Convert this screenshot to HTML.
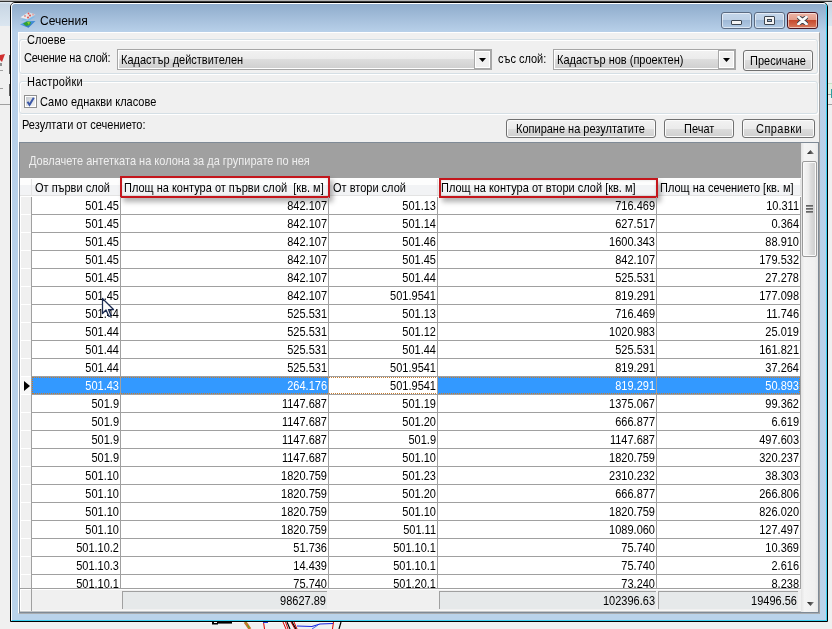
<!DOCTYPE html>
<html><head><meta charset="utf-8"><style>
*{margin:0;padding:0;box-sizing:border-box}
html,body{width:832px;height:629px;overflow:hidden;background:#f0f0f0;font-family:"Liberation Sans",sans-serif;font-size:11px;color:#000}
.a{position:absolute}
.t{position:absolute;white-space:pre;line-height:13px;font-size:11px;transform:scaleY(1.14);transform-origin:0 0;will-change:transform}
.r{text-align:right}
.gb{position:absolute;border:1px solid #d5dfe5;border-radius:3px;box-shadow:inset 1px 1px 0 #fff,1px 1px 0 #fff}
.tbtn{position:absolute;top:12px;width:31px;height:17px;border:1px solid #5b6b82;border-radius:3px;background:linear-gradient(#c4d6ea 0,#bdd0e6 7px,#9db7d5 7px,#b3cbe5 100%);box-shadow:inset 0 0 0 1px rgba(255,255,255,.55)}
.btn{position:absolute;border:1px solid #707070;border-radius:3px;background:linear-gradient(#f2f2f2 0,#ebebeb 50%,#dddddd 50%,#cfcfcf 100%);box-shadow:inset 0 0 0 1px #fbfbfb}
.combo{position:absolute;border:1px solid #a6a6a6;background:linear-gradient(#f2f2f2 0,#ebebeb 50%,#dddddd 50%,#cfcfcf 100%);box-shadow:inset 0 0 0 1px #fff}
.hl{position:absolute;left:0;width:781px;height:1px;background:#a0a0a0}
.vl{position:absolute;width:1px;background:#a0a0a0}
</style></head><body>
<div class="a" style="left:0;top:0;width:832px;height:1px;background:#b4b4b4"></div>
<div class="a" style="left:0;top:1px;width:832px;height:1px;background:#333"></div>
<div class="a" style="left:0;top:2px;width:10px;height:24px;background:linear-gradient(#e6edf5,#c8d6e4 2px,#dbe6f0)"></div>
<div class="a" style="left:828px;top:2px;width:4px;height:24px;background:linear-gradient(#e6edf5,#c8d6e4 2px,#dbe6f0)"></div>
<div class="a" style="left:0;top:104px;width:10px;height:1px;background:#a0a0a0"></div>
<div class="a" style="left:828px;top:104px;width:4px;height:1px;background:#a0a0a0"></div>
<div class="a" style="left:828px;top:83px;width:4px;height:11px;background:#e6f2e6;border-top:1px solid #c4e4c4"></div>
<div class="a" style="left:828px;top:94px;width:3px;height:1px;background:#a0a0a0"></div>
<div class="a" style="left:831px;top:89px;width:1px;height:9px;background:#30a0a0"></div>
<svg class="a" style="left:0;top:54px" width="10" height="44"><polygon points="0,1 5,0 2,8 0,6" fill="#d03030"/><rect x="0" y="9" width="2" height="3" fill="#909090"/><rect x="0" y="16" width="3" height="1" fill="#a0a0a0"/><rect x="0" y="34" width="3" height="1" fill="#a0a0a0"/><rect x="9" y="1" width="1" height="19" fill="#606060"/><rect x="9" y="30" width="1" height="12" fill="#606060"/></svg>
<div class="a" style="left:10px;top:2px;width:818px;height:620px;border:1px solid #000;border-radius:5px 5px 0 0;background:linear-gradient(#8eabcb 0px,#b8d0e9 29px,#bad3eb 100%)"></div>
<div class="a" style="left:11px;top:3px;width:816px;height:618px;border-top:1px solid #fff;border-left:1px solid #fff;border-right:1px solid #3ad0f0;border-bottom:1px solid #3ad0f0;border-radius:4px 4px 0 0"></div>
<svg class="a" style="left:18px;top:10px" width="22" height="20" viewBox="0 0 22 20">
<defs><linearGradient id="gb" x1="0" y1="0" x2="1" y2="1"><stop offset="0" stop-color="#6ab8f0"/><stop offset="1" stop-color="#1a60b8"/></linearGradient>
<linearGradient id="gt" x1="0" y1="0" x2="1" y2="0"><stop offset="0" stop-color="#f4f4f4"/><stop offset="1" stop-color="#d0d4d8"/></linearGradient></defs>
<polygon points="2,14.5 8.5,11 17.5,11 10.5,17.8" fill="url(#gb)"/>
<polygon points="5,13.5 9,11.5 13,12 12,15 8,16" fill="#30a030"/><polygon points="9,12 12,11.5 11,15" fill="#90d030"/>
<polygon points="3,10.5 9,7 17.5,6.5 11,10.5" fill="#70b8ee" opacity=".75"/>
<polygon points="2.5,7.3 10.5,2.2 17.5,4.5 9.5,9.5" fill="url(#gt)"/>
<circle cx="10.5" cy="3.5" r=".9" fill="#e05050"/><circle cx="7" cy="6" r=".9" fill="#e08080"/><circle cx="12" cy="5.5" r="1" fill="#e05050"/><circle cx="10" cy="7.5" r="1" fill="#e05050"/><circle cx="15" cy="4.5" r=".9" fill="#e8a0a0"/>
</svg>
<div class="t" style="left:40px;top:14px;font-size:12px;line-height:15px;transform:none;color:#000">Сечения</div>
<div class="tbtn" style="left:721px"></div>
<div class="tbtn" style="left:754px"></div>
<div class="tbtn" style="left:787px;border-color:#4a1520;background:linear-gradient(#ecb4a6 0,#e29c8a 7px,#c5462a 7px,#d87a5e 100%)"></div>
<div class="a" style="left:731px;top:20px;width:11px;height:5px;border:1px solid #3c4550;border-radius:1px;background:#f4f4f4"></div>
<div class="a" style="left:764px;top:16px;width:11px;height:9px;border:1px solid #3c4550;border-radius:1px;background:#f4f4f4"></div>
<div class="a" style="left:767px;top:19px;width:5px;height:3px;border:1px solid #3c4550;background:#9db7d5"></div>
<svg class="a" style="left:797px;top:16px" width="11" height="9" viewBox="0 0 11 9"><path d="M1.5,1 L9.5,8 M9.5,1 L1.5,8" stroke="#3a3f48" stroke-width="4.6" stroke-linecap="round"/><path d="M1.5,1 L9.5,8 M9.5,1 L1.5,8" stroke="#fafafa" stroke-width="2.8" stroke-linecap="round"/></svg>
<div class="a" style="left:18px;top:32px;width:802px;height:582px;background:#f0f0f0;border-top:1px solid #fff;border-left:1px solid #fff;border-right:1px solid #a0a0a0;border-bottom:1px solid #a8acb0"></div>
<div class="gb" style="left:19px;top:39px;width:799px;height:35px"></div>
<div class="a" style="left:27px;top:36px;width:38px;height:8px;background:#f0f0f0"></div>
<div class="t" style="left:27px;top:33px;">Слоеве</div>
<div class="t" style="left:24px;top:51px;letter-spacing:-0.2px">Сечение на слой:</div>
<div class="combo" style="left:117px;top:49px;width:375px;height:21px"></div>
<div class="a" style="left:474px;top:49px;width:18px;height:21px;background:#f0f0f0;border:2px solid #a8a8a8;border-left:1px solid #a8a8a8;box-shadow:inset 1px 1px 0 #fff,inset -1px -1px 0 #fff"></div>
<svg class="a" style="left:479px;top:58px" width="8" height="5"><polygon points="0,0 7,0 3.5,4" fill="#000"/></svg>
<div class="t" style="left:121px;top:53px;">Кадастър действителен</div>
<div class="t" style="left:498px;top:52px;">със слой:</div>
<div class="combo" style="left:553px;top:49px;width:183px;height:21px"></div>
<div class="a" style="left:718px;top:49px;width:18px;height:21px;background:#f0f0f0;border:2px solid #a8a8a8;border-left:1px solid #a8a8a8;box-shadow:inset 1px 1px 0 #fff,inset -1px -1px 0 #fff"></div>
<svg class="a" style="left:723px;top:58px" width="8" height="5"><polygon points="0,0 7,0 3.5,4" fill="#000"/></svg>
<div class="t" style="left:557px;top:53px;">Кадастър нов (проектен)</div>
<div class="btn" style="left:743px;top:50px;width:70px;height:21px"></div>
<div class="t" style="left:750px;top:54px;">Пресичане</div>
<div class="gb" style="left:19px;top:81px;width:799px;height:33px"></div>
<div class="a" style="left:27px;top:78px;width:55px;height:8px;background:#f0f0f0"></div>
<div class="t" style="left:27px;top:75px;letter-spacing:0.2px">Настройки</div>
<div class="a" style="left:24px;top:95px;width:13px;height:13px;border:1px solid #8f8f8f;background:#fff"></div>
<div class="a" style="left:26px;top:97px;width:9px;height:9px;background:linear-gradient(135deg,#c4c8ce,#e4e6e8 60%,#f2f2f2)"></div>
<svg class="a" style="left:24px;top:95px" width="13" height="13" viewBox="0 0 13 13"><path d="M3.5,6.8 L5.5,9.8 L9.8,2.8" fill="none" stroke="#3c58a8" stroke-width="2"/></svg>
<div class="t" style="left:40px;top:95px;">Само еднакви класове</div>
<div class="t" style="left:22px;top:118px;">Резултати от сечението:</div>
<div class="btn" style="left:506px;top:119px;width:150px;height:19px"></div>
<div class="btn" style="left:664px;top:119px;width:70px;height:19px"></div>
<div class="btn" style="left:742px;top:119px;width:73px;height:19px"></div>
<div class="t" style="left:516px;top:122px;">Копиране на резултатите</div>
<div class="t" style="left:684px;top:122px;">Печат</div>
<div class="t" style="left:756px;top:122px;letter-spacing:0.45px">Справки</div>
<div class="a" style="left:19px;top:142px;width:800px;height:471px;border:1px solid #7f8a96;background:#fff"></div>
<div class="a" style="left:20px;top:143px;width:781px;height:35px;background:#a0a0a0"></div>
<div class="t" style="left:29px;top:154px;color:#eeeeee">Довлачете антетката на колона за да групирате по нея</div>
<div class="a" style="left:20px;top:178px;width:781px;height:18px;background:linear-gradient(#fdfdfd 0,#fdfdfd 7px,#f2f3f5 7px,#f2f3f5 17px,#e3e3e3 17px)"></div>
<div class="a" style="left:31px;top:179px;width:1px;height:16px;background:#e4e4e4"></div>
<div class="a" style="left:120px;top:179px;width:1px;height:16px;background:#e4e4e4"></div>
<div class="a" style="left:328px;top:179px;width:1px;height:16px;background:#e4e4e4"></div>
<div class="a" style="left:437px;top:179px;width:1px;height:16px;background:#e4e4e4"></div>
<div class="a" style="left:656px;top:179px;width:1px;height:16px;background:#e4e4e4"></div>
<div class="a" style="left:800px;top:179px;width:1px;height:16px;background:#e4e4e4"></div>
<div class="t" style="left:35px;top:181px;">От първи слой</div>
<div class="t" style="left:124px;top:181px;">Площ на контура от първи слой  [кв. м]</div>
<div class="t" style="left:333px;top:181px;">От втори слой</div>
<div class="t" style="left:441px;top:181px;">Площ на контура от втори слой [кв. м]</div>
<div class="t" style="left:660px;top:181px;">Площ на сечението [кв. м]</div>
<div class="a" style="left:120px;top:176px;width:210px;height:22px;border:2px solid #c4161c;box-shadow:3px 4px 5px rgba(0,0,0,.3), inset 0 0 3px rgba(0,0,0,.15)"></div>
<div class="a" style="left:439px;top:178px;width:219px;height:20px;border:2px solid #c4161c;box-shadow:3px 4px 5px rgba(0,0,0,.3), inset 0 0 3px rgba(0,0,0,.15)"></div>
<div class="a" style="left:20px;top:196px;width:781px;height:393px;overflow:hidden">
<div class="a" style="left:0;top:0px;width:11px;height:18px;background:#f0f0f0;box-shadow:inset 1px 1px 0 #fff"></div>
<div class="t r" style="left:12px;top:3px;width:87px;color:#000">501.45</div>
<div class="t r" style="left:101px;top:3px;width:206px;color:#000">842.107</div>
<div class="t r" style="left:309px;top:3px;width:107px;color:#000">501.13</div>
<div class="t r" style="left:418px;top:3px;width:217px;color:#000">716.469</div>
<div class="t r" style="left:637px;top:3px;width:142px;color:#000">10.311</div>
<div class="hl" style="top:18px"></div>
<div class="a" style="left:0;top:18px;width:11px;height:18px;background:#f0f0f0;box-shadow:inset 1px 1px 0 #fff"></div>
<div class="t r" style="left:12px;top:21px;width:87px;color:#000">501.45</div>
<div class="t r" style="left:101px;top:21px;width:206px;color:#000">842.107</div>
<div class="t r" style="left:309px;top:21px;width:107px;color:#000">501.14</div>
<div class="t r" style="left:418px;top:21px;width:217px;color:#000">627.517</div>
<div class="t r" style="left:637px;top:21px;width:142px;color:#000">0.364</div>
<div class="hl" style="top:36px"></div>
<div class="a" style="left:0;top:36px;width:11px;height:18px;background:#f0f0f0;box-shadow:inset 1px 1px 0 #fff"></div>
<div class="t r" style="left:12px;top:39px;width:87px;color:#000">501.45</div>
<div class="t r" style="left:101px;top:39px;width:206px;color:#000">842.107</div>
<div class="t r" style="left:309px;top:39px;width:107px;color:#000">501.46</div>
<div class="t r" style="left:418px;top:39px;width:217px;color:#000">1600.343</div>
<div class="t r" style="left:637px;top:39px;width:142px;color:#000">88.910</div>
<div class="hl" style="top:54px"></div>
<div class="a" style="left:0;top:54px;width:11px;height:18px;background:#f0f0f0;box-shadow:inset 1px 1px 0 #fff"></div>
<div class="t r" style="left:12px;top:57px;width:87px;color:#000">501.45</div>
<div class="t r" style="left:101px;top:57px;width:206px;color:#000">842.107</div>
<div class="t r" style="left:309px;top:57px;width:107px;color:#000">501.45</div>
<div class="t r" style="left:418px;top:57px;width:217px;color:#000">842.107</div>
<div class="t r" style="left:637px;top:57px;width:142px;color:#000">179.532</div>
<div class="hl" style="top:72px"></div>
<div class="a" style="left:0;top:72px;width:11px;height:18px;background:#f0f0f0;box-shadow:inset 1px 1px 0 #fff"></div>
<div class="t r" style="left:12px;top:75px;width:87px;color:#000">501.45</div>
<div class="t r" style="left:101px;top:75px;width:206px;color:#000">842.107</div>
<div class="t r" style="left:309px;top:75px;width:107px;color:#000">501.44</div>
<div class="t r" style="left:418px;top:75px;width:217px;color:#000">525.531</div>
<div class="t r" style="left:637px;top:75px;width:142px;color:#000">27.278</div>
<div class="hl" style="top:90px"></div>
<div class="a" style="left:0;top:90px;width:11px;height:18px;background:#f0f0f0;box-shadow:inset 1px 1px 0 #fff"></div>
<div class="t r" style="left:12px;top:93px;width:87px;color:#000">501.45</div>
<div class="t r" style="left:101px;top:93px;width:206px;color:#000">842.107</div>
<div class="t r" style="left:309px;top:93px;width:107px;color:#000">501.9541</div>
<div class="t r" style="left:418px;top:93px;width:217px;color:#000">819.291</div>
<div class="t r" style="left:637px;top:93px;width:142px;color:#000">177.098</div>
<div class="hl" style="top:108px"></div>
<div class="a" style="left:0;top:108px;width:11px;height:18px;background:#f0f0f0;box-shadow:inset 1px 1px 0 #fff"></div>
<div class="t r" style="left:12px;top:111px;width:87px;color:#000">501.44</div>
<div class="t r" style="left:101px;top:111px;width:206px;color:#000">525.531</div>
<div class="t r" style="left:309px;top:111px;width:107px;color:#000">501.13</div>
<div class="t r" style="left:418px;top:111px;width:217px;color:#000">716.469</div>
<div class="t r" style="left:637px;top:111px;width:142px;color:#000">11.746</div>
<div class="hl" style="top:126px"></div>
<div class="a" style="left:0;top:126px;width:11px;height:18px;background:#f0f0f0;box-shadow:inset 1px 1px 0 #fff"></div>
<div class="t r" style="left:12px;top:129px;width:87px;color:#000">501.44</div>
<div class="t r" style="left:101px;top:129px;width:206px;color:#000">525.531</div>
<div class="t r" style="left:309px;top:129px;width:107px;color:#000">501.12</div>
<div class="t r" style="left:418px;top:129px;width:217px;color:#000">1020.983</div>
<div class="t r" style="left:637px;top:129px;width:142px;color:#000">25.019</div>
<div class="hl" style="top:144px"></div>
<div class="a" style="left:0;top:144px;width:11px;height:18px;background:#f0f0f0;box-shadow:inset 1px 1px 0 #fff"></div>
<div class="t r" style="left:12px;top:147px;width:87px;color:#000">501.44</div>
<div class="t r" style="left:101px;top:147px;width:206px;color:#000">525.531</div>
<div class="t r" style="left:309px;top:147px;width:107px;color:#000">501.44</div>
<div class="t r" style="left:418px;top:147px;width:217px;color:#000">525.531</div>
<div class="t r" style="left:637px;top:147px;width:142px;color:#000">161.821</div>
<div class="hl" style="top:162px"></div>
<div class="a" style="left:0;top:162px;width:11px;height:18px;background:#f0f0f0;box-shadow:inset 1px 1px 0 #fff"></div>
<div class="t r" style="left:12px;top:165px;width:87px;color:#000">501.44</div>
<div class="t r" style="left:101px;top:165px;width:206px;color:#000">525.531</div>
<div class="t r" style="left:309px;top:165px;width:107px;color:#000">501.9541</div>
<div class="t r" style="left:418px;top:165px;width:217px;color:#000">819.291</div>
<div class="t r" style="left:637px;top:165px;width:142px;color:#000">37.264</div>
<div class="hl" style="top:180px"></div>
<div class="a" style="left:0;top:180px;width:11px;height:18px;background:#f7f7f7;box-shadow:inset 1px 1px 0 #fff"></div>
<div class="a" style="left:12px;top:181px;width:768px;height:17px;background:#3399ff"></div>
<div class="a" style="left:309px;top:181px;width:108px;height:17px;background:#fff"></div>
<div class="a" style="left:12px;top:181px;width:768px;height:17px;border:1px dotted #c67a2c"></div>
<div class="a" style="left:4px;top:185px;width:0;height:0;border-left:6px solid #000;border-top:5px solid transparent;border-bottom:5px solid transparent"></div>
<div class="t r" style="left:12px;top:183px;width:87px;color:#fff">501.43</div>
<div class="t r" style="left:101px;top:183px;width:206px;color:#fff">264.176</div>
<div class="t r" style="left:309px;top:183px;width:107px;color:#000">501.9541</div>
<div class="t r" style="left:418px;top:183px;width:217px;color:#fff">819.291</div>
<div class="t r" style="left:637px;top:183px;width:142px;color:#fff">50.893</div>
<div class="hl" style="top:198px"></div>
<div class="a" style="left:0;top:198px;width:11px;height:18px;background:#f0f0f0;box-shadow:inset 1px 1px 0 #fff"></div>
<div class="t r" style="left:12px;top:201px;width:87px;color:#000">501.9</div>
<div class="t r" style="left:101px;top:201px;width:206px;color:#000">1147.687</div>
<div class="t r" style="left:309px;top:201px;width:107px;color:#000">501.19</div>
<div class="t r" style="left:418px;top:201px;width:217px;color:#000">1375.067</div>
<div class="t r" style="left:637px;top:201px;width:142px;color:#000">99.362</div>
<div class="hl" style="top:216px"></div>
<div class="a" style="left:0;top:216px;width:11px;height:18px;background:#f0f0f0;box-shadow:inset 1px 1px 0 #fff"></div>
<div class="t r" style="left:12px;top:219px;width:87px;color:#000">501.9</div>
<div class="t r" style="left:101px;top:219px;width:206px;color:#000">1147.687</div>
<div class="t r" style="left:309px;top:219px;width:107px;color:#000">501.20</div>
<div class="t r" style="left:418px;top:219px;width:217px;color:#000">666.877</div>
<div class="t r" style="left:637px;top:219px;width:142px;color:#000">6.619</div>
<div class="hl" style="top:234px"></div>
<div class="a" style="left:0;top:234px;width:11px;height:18px;background:#f0f0f0;box-shadow:inset 1px 1px 0 #fff"></div>
<div class="t r" style="left:12px;top:237px;width:87px;color:#000">501.9</div>
<div class="t r" style="left:101px;top:237px;width:206px;color:#000">1147.687</div>
<div class="t r" style="left:309px;top:237px;width:107px;color:#000">501.9</div>
<div class="t r" style="left:418px;top:237px;width:217px;color:#000">1147.687</div>
<div class="t r" style="left:637px;top:237px;width:142px;color:#000">497.603</div>
<div class="hl" style="top:252px"></div>
<div class="a" style="left:0;top:252px;width:11px;height:18px;background:#f0f0f0;box-shadow:inset 1px 1px 0 #fff"></div>
<div class="t r" style="left:12px;top:255px;width:87px;color:#000">501.9</div>
<div class="t r" style="left:101px;top:255px;width:206px;color:#000">1147.687</div>
<div class="t r" style="left:309px;top:255px;width:107px;color:#000">501.10</div>
<div class="t r" style="left:418px;top:255px;width:217px;color:#000">1820.759</div>
<div class="t r" style="left:637px;top:255px;width:142px;color:#000">320.237</div>
<div class="hl" style="top:270px"></div>
<div class="a" style="left:0;top:270px;width:11px;height:18px;background:#f0f0f0;box-shadow:inset 1px 1px 0 #fff"></div>
<div class="t r" style="left:12px;top:273px;width:87px;color:#000">501.10</div>
<div class="t r" style="left:101px;top:273px;width:206px;color:#000">1820.759</div>
<div class="t r" style="left:309px;top:273px;width:107px;color:#000">501.23</div>
<div class="t r" style="left:418px;top:273px;width:217px;color:#000">2310.232</div>
<div class="t r" style="left:637px;top:273px;width:142px;color:#000">38.303</div>
<div class="hl" style="top:288px"></div>
<div class="a" style="left:0;top:288px;width:11px;height:18px;background:#f0f0f0;box-shadow:inset 1px 1px 0 #fff"></div>
<div class="t r" style="left:12px;top:291px;width:87px;color:#000">501.10</div>
<div class="t r" style="left:101px;top:291px;width:206px;color:#000">1820.759</div>
<div class="t r" style="left:309px;top:291px;width:107px;color:#000">501.20</div>
<div class="t r" style="left:418px;top:291px;width:217px;color:#000">666.877</div>
<div class="t r" style="left:637px;top:291px;width:142px;color:#000">266.806</div>
<div class="hl" style="top:306px"></div>
<div class="a" style="left:0;top:306px;width:11px;height:18px;background:#f0f0f0;box-shadow:inset 1px 1px 0 #fff"></div>
<div class="t r" style="left:12px;top:309px;width:87px;color:#000">501.10</div>
<div class="t r" style="left:101px;top:309px;width:206px;color:#000">1820.759</div>
<div class="t r" style="left:309px;top:309px;width:107px;color:#000">501.10</div>
<div class="t r" style="left:418px;top:309px;width:217px;color:#000">1820.759</div>
<div class="t r" style="left:637px;top:309px;width:142px;color:#000">826.020</div>
<div class="hl" style="top:324px"></div>
<div class="a" style="left:0;top:324px;width:11px;height:18px;background:#f0f0f0;box-shadow:inset 1px 1px 0 #fff"></div>
<div class="t r" style="left:12px;top:327px;width:87px;color:#000">501.10</div>
<div class="t r" style="left:101px;top:327px;width:206px;color:#000">1820.759</div>
<div class="t r" style="left:309px;top:327px;width:107px;color:#000">501.11</div>
<div class="t r" style="left:418px;top:327px;width:217px;color:#000">1089.060</div>
<div class="t r" style="left:637px;top:327px;width:142px;color:#000">127.497</div>
<div class="hl" style="top:342px"></div>
<div class="a" style="left:0;top:342px;width:11px;height:18px;background:#f0f0f0;box-shadow:inset 1px 1px 0 #fff"></div>
<div class="t r" style="left:12px;top:345px;width:87px;color:#000">501.10.2</div>
<div class="t r" style="left:101px;top:345px;width:206px;color:#000">51.736</div>
<div class="t r" style="left:309px;top:345px;width:107px;color:#000">501.10.1</div>
<div class="t r" style="left:418px;top:345px;width:217px;color:#000">75.740</div>
<div class="t r" style="left:637px;top:345px;width:142px;color:#000">10.369</div>
<div class="hl" style="top:360px"></div>
<div class="a" style="left:0;top:360px;width:11px;height:18px;background:#f0f0f0;box-shadow:inset 1px 1px 0 #fff"></div>
<div class="t r" style="left:12px;top:363px;width:87px;color:#000">501.10.3</div>
<div class="t r" style="left:101px;top:363px;width:206px;color:#000">14.439</div>
<div class="t r" style="left:309px;top:363px;width:107px;color:#000">501.10.1</div>
<div class="t r" style="left:418px;top:363px;width:217px;color:#000">75.740</div>
<div class="t r" style="left:637px;top:363px;width:142px;color:#000">2.616</div>
<div class="hl" style="top:378px"></div>
<div class="a" style="left:0;top:378px;width:11px;height:18px;background:#f0f0f0;box-shadow:inset 1px 1px 0 #fff"></div>
<div class="t r" style="left:12px;top:381px;width:87px;color:#000">501.10.1</div>
<div class="t r" style="left:101px;top:381px;width:206px;color:#000">75.740</div>
<div class="t r" style="left:309px;top:381px;width:107px;color:#000">501.20.1</div>
<div class="t r" style="left:418px;top:381px;width:217px;color:#000">73.240</div>
<div class="t r" style="left:637px;top:381px;width:142px;color:#000">8.238</div>
<div class="hl" style="top:396px"></div>
<div class="vl" style="left:11px;top:1px;height:392px"></div>
<div class="vl" style="left:100px;top:1px;height:392px"></div>
<div class="vl" style="left:308px;top:1px;height:392px"></div>
<div class="vl" style="left:417px;top:1px;height:392px"></div>
<div class="vl" style="left:636px;top:1px;height:392px"></div>
<div class="vl" style="left:780px;top:1px;height:392px"></div>
</div>
<div class="a" style="left:20px;top:588px;width:781px;height:1px;background:#a0a0a0"></div>
<div class="a" style="left:20px;top:589px;width:781px;height:1px;background:#fff"></div>
<div class="a" style="left:20px;top:590px;width:781px;height:21px;background:#f0f0f0"></div>
<div class="a" style="left:20px;top:589px;width:1px;height:22px;background:#fff"></div>
<div class="a" style="left:20px;top:610px;width:798px;height:1px;background:#f8f8f8"></div>
<div class="a" style="left:20px;top:611px;width:798px;height:1px;background:#c4c6c8"></div>
<div class="a" style="left:31px;top:589px;width:1px;height:22px;background:#a0a0a0"></div>
<div class="a" style="left:122px;top:591px;width:205px;height:18px;background:#e6e9ea;border-left:1px solid #a0a0a0;border-top:1px solid #a0a0a0"></div>
<div class="t r" style="left:122px;top:594px;width:204px">98627.89</div>
<div class="a" style="left:439px;top:591px;width:217px;height:18px;background:#e6e9ea;border-left:1px solid #a0a0a0;border-top:1px solid #a0a0a0"></div>
<div class="t r" style="left:439px;top:594px;width:216px">102396.63</div>
<div class="a" style="left:658px;top:591px;width:140px;height:18px;background:#e6e9ea;border-left:1px solid #a0a0a0;border-top:1px solid #a0a0a0"></div>
<div class="t r" style="left:658px;top:594px;width:139px">19496.56</div>
<div class="a" style="left:801px;top:143px;width:17px;height:469px;background:linear-gradient(90deg,#e4e4e4,#f4f4f4 20%,#f0f0f0 80%,#e8e8e8)"></div>
<svg class="a" style="left:806px;top:149px" width="9" height="6"><defs><linearGradient id="ag" x1="0" x2="1"><stop offset="0" stop-color="#101010"/><stop offset="1" stop-color="#909090"/></linearGradient></defs><polygon points="1,5 4.5,1 8,5" fill="url(#ag)"/></svg>
<svg class="a" style="left:806px;top:601px" width="9" height="6"><polygon points="1,1 8,1 4.5,5" fill="url(#ag)"/></svg>
<div class="a" style="left:802px;top:161px;width:15px;height:96px;border:1px solid #9a9a9a;border-radius:2px;background:linear-gradient(90deg,#f6f6f6 0,#ececec 40%,#dcdcdc 60%,#d2d2d2 85%,#dadada 100%);box-shadow:inset 0 0 0 1px #fafafa"></div>
<div class="a" style="left:806px;top:205px;width:7px;height:2px;background:linear-gradient(#505050,#a0a0a0)"></div>
<div class="a" style="left:806px;top:208px;width:7px;height:2px;background:linear-gradient(#505050,#a0a0a0)"></div>
<div class="a" style="left:806px;top:211px;width:7px;height:2px;background:linear-gradient(#505050,#a0a0a0)"></div>
<svg class="a" style="left:101px;top:297px" width="14" height="21" viewBox="0 0 14 21"><path d="M1.5,1.5 L1.5,16.5 L5,13 L8,19.5 L10,18.5 L7.5,12.5 L12.5,12.5 Z" fill="#fafafa" stroke="#1a2a50" stroke-width="1.25" stroke-linejoin="round"/></svg>
<svg class="a" style="left:200px;top:622px" width="150" height="7" viewBox="0 0 150 7">
<rect x="0" y="0" width="150" height="1" fill="#fafafa"/>
<rect x="12" y="0" width="20" height="1.6" fill="#000"/><rect x="12" y="1" width="6" height="1.5" fill="#000"/><rect x="14" y="0" width="3" height="1" fill="#fff"/>
<path d="M45,0 L50,7" stroke="#c87028" stroke-width="3"/><path d="M46,0.5 L46.5,1.5 M48,3.5 L49,5.5" stroke="#30d030" stroke-width="1"/>
<path d="M63.5,0 L64.5,7 M83,0 L86,7 M85.5,0 L88,7 M91,0 L95,7 M94,0 L97,7 M133.5,0 L132.5,7" stroke="#e00000" stroke-width="1"/>
<path d="M87,0 L90,7 M92,0 L96,7 M141,0 L139,7" stroke="#000" stroke-width="1.2"/>
<path d="M63,0.5 L68,0.5" stroke="#2040e0" stroke-width="1"/>
<path d="M97,4 L112,4.5 L120,2 L133,1.5" stroke="#1a28e0" stroke-width="1.2" fill="none"/>
<path d="M112,7 L118,3" stroke="#4060f0" stroke-width="1"/>
</svg>
</body></html>
